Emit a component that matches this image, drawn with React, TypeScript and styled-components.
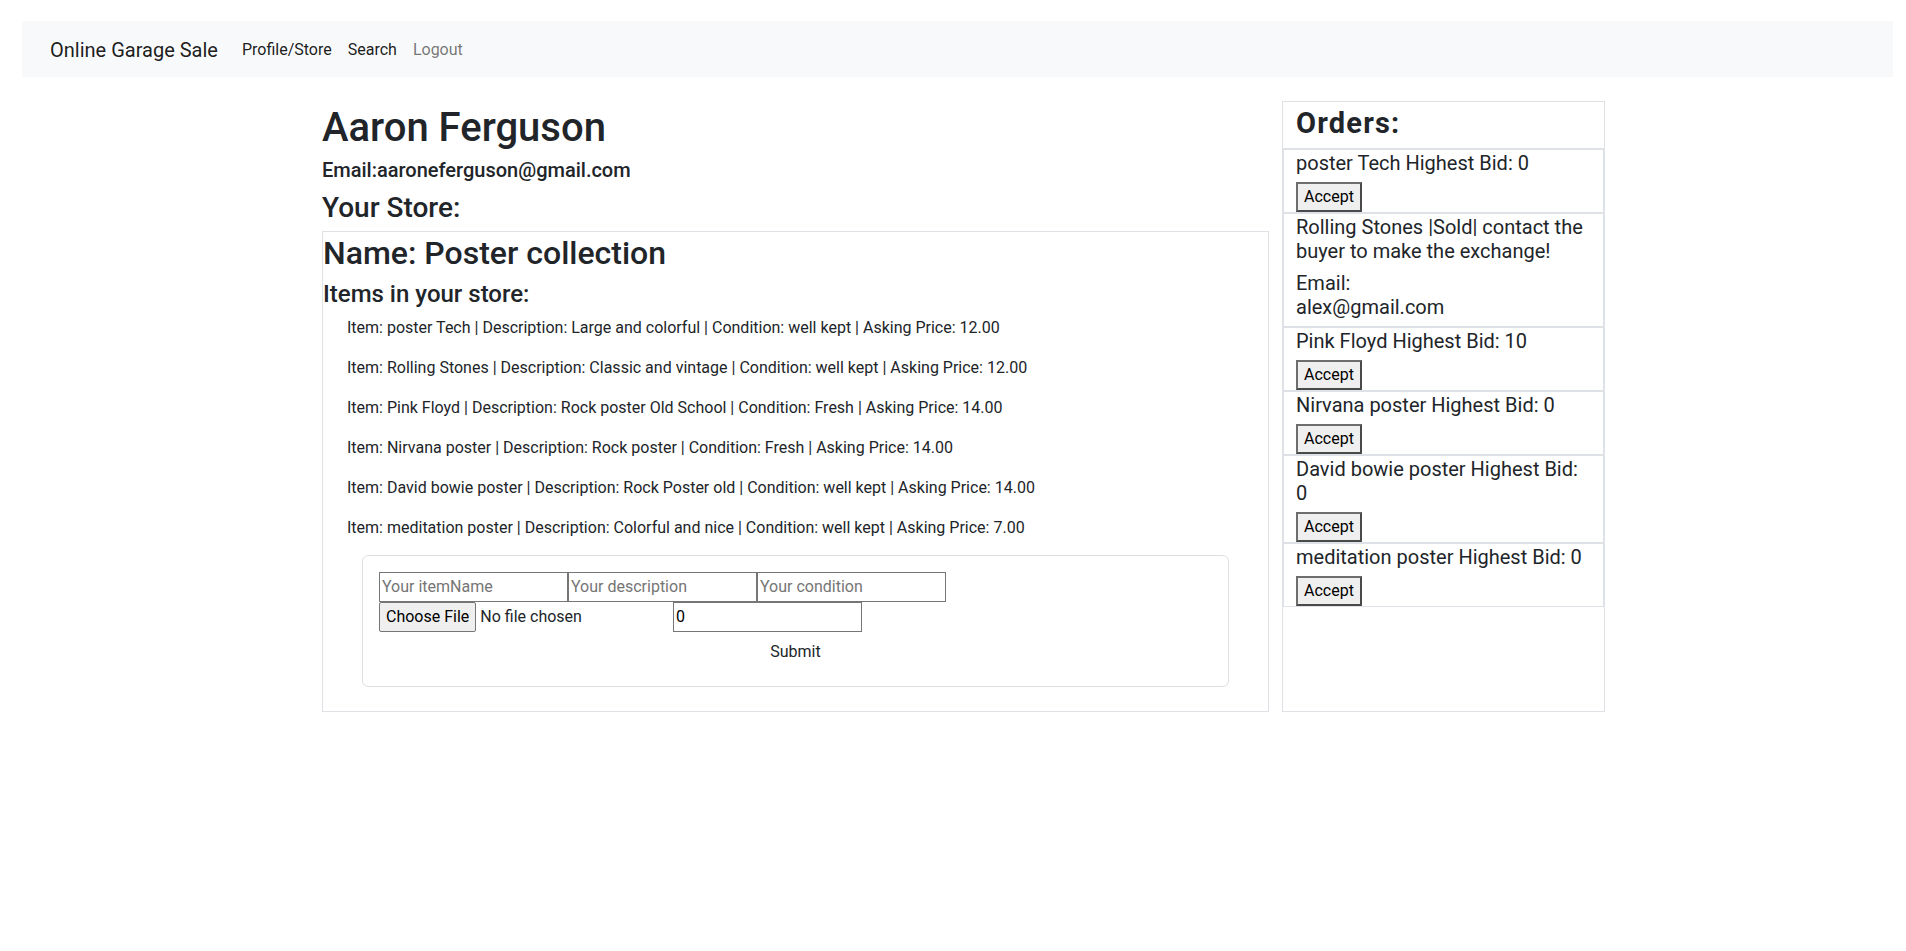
import React from "react";
import styled, { createGlobalStyle } from "styled-components";

const GlobalStyle = createGlobalStyle`
  *, *::before, *::after { box-sizing: border-box; }
  body {
    margin: 0;
    background: #ffffff;
    color: #212529;
    font-family: Roboto, "Liberation Sans", Arial, sans-serif;
    font-size: 16px;
    line-height: 1.5;
  }
`;

const Page = styled.div`
  padding-top: 21px;
  min-height: 951px;
`;

const NavBar = styled.nav`
  display: flex;
  align-items: center;
  height: 56px;
  margin: 0 13px 0 22px;
  padding: 8px 28px;
  background: #f8f9fa;
`;

const Brand = styled.a`
  font-size: 20px;
  line-height: 30px;
  padding: 6px 0 4px;
  margin-right: 16px;
  color: rgba(0, 0, 0, 0.9);
  text-decoration: none;
`;

const NavLinks = styled.div`
  display: flex;
`;

const NavLink = styled.a<{ $muted?: boolean }>`
  padding: 9px 8px 7px;
  font-size: 16px;
  line-height: 24px;
  color: ${(p) => (p.$muted ? "rgba(0, 0, 0, 0.55)" : "rgba(0, 0, 0, 0.9)")};
  text-decoration: none;
`;

const Main = styled.main`
  display: flex;
  align-items: stretch;
  gap: 13px;
  padding: 24px 0 0 322px;
`;

const ProfileColumn = styled.section`
  width: 947px;
  display: flex;
  flex-direction: column;
`;

const Heading = styled.h1<{ $size: number; $weight?: number }>`
  margin: 0 0 8px;
  font-size: ${(p) => p.$size}px;
  font-weight: ${(p) => p.$weight ?? 500};
  line-height: 1.2;
  padding-top: ${(p) => Math.round(p.$size * 0.07)}px;
  margin-bottom: ${(p) => 8 - Math.round(p.$size * 0.07)}px;
`;

const StoreBox = styled.div`
  border: 1px solid #dee2e6;
`;

const ItemList = styled.div`
  padding-left: 24px;
`;

const ItemLine = styled.p`
  margin: 0 0 15px;
  padding-top: 1px;
  font-size: 16px;
  line-height: 24px;
`;

const FormCard = styled.form`
  margin: 0 39px 24px;
  padding: 16px;
  border: 1px solid rgba(0, 0, 0, 0.125);
  border-radius: 6px;
`;

const FormRow = styled.div`
  display: flex;
`;

const TextInput = styled.input<{ $width?: number }>`
  width: ${(p) => p.$width ?? 189}px;
  height: 30px;
  margin: 0;
  padding: 1px 2px;
  border: 1px solid #767676;
  border-radius: 0;
  font: inherit;
  font-size: 16px;
  line-height: 24px;
  color: #000;
  background: #fff;
  &::placeholder { color: #757575; }
  &::-webkit-inner-spin-button,
  &::-webkit-outer-spin-button { opacity: 0; }
`;

const FileInput = styled.input`
  width: 294px;
  height: 30px;
  margin: 0;
  padding: 0;
  font: inherit;
  font-size: 16px;
  line-height: 24px;
  color: #212529;
  &::file-selector-button {
    height: 30px;
    margin: 0 4px 0 0;
    padding: 1px 6px;
    font: inherit;
    color: #000;
    background: #efefef;
    border: 1px solid #767676;
    border-radius: 2px;
  }
`;

const SubmitRow = styled.div`
  display: flex;
  justify-content: center;
`;

const SubmitButton = styled.button`
  padding: 7px 12px 5px;
  border: 1px solid transparent;
  background: transparent;
  font: inherit;
  font-size: 16px;
  line-height: 24px;
  color: #212529;
`;

const OrdersPanel = styled.aside`
  width: 323px;
  border: 1px solid #dee2e6;
  display: flex;
  flex-direction: column;
`;

const OrdersTitle = styled.h3`
  margin: 0;
  padding: 5px 12px 8px 13px;
  font-size: 29px;
  font-weight: 700;
  letter-spacing: 1.2px;
  line-height: 33px;
  border-bottom: 1px solid #dee2e6;
`;

const OrderItem = styled.div`
  display: flex;
  flex-direction: column;
  align-items: flex-start;
  padding: 0 12px;
  border: 1px solid #dee2e6;
`;

const OrderText = styled.p`
  margin: 0 0 7px;
  padding-top: 1px;
  font-size: 20px;
  line-height: 24px;
`;

const AcceptButton = styled.button`
  margin: 0;
  padding: 1px 6px;
  font: inherit;
  font-size: 16px;
  line-height: 24px;
  color: #000;
  background: #efefef;
  border: 2px solid;
  border-color: #6e6e6e #4a4a4a #4a4a4a #6e6e6e;
  border-radius: 0;
`;

const items = [
  "Item: poster Tech | Description: Large and colorful | Condition: well kept | Asking Price: 12.00",
  "Item: Rolling Stones | Description: Classic and vintage | Condition: well kept | Asking Price: 12.00",
  "Item: Pink Floyd | Description: Rock poster Old School | Condition: Fresh | Asking Price: 14.00",
  "Item: Nirvana poster | Description: Rock poster | Condition: Fresh | Asking Price: 14.00",
  "Item: David bowie poster | Description: Rock Poster old | Condition: well kept | Asking Price: 14.00",
  "Item: meditation poster | Description: Colorful and nice | Condition: well kept | Asking Price: 7.00",
];

type Order =
  | { kind: "bid"; name: string; bid: number }
  | { kind: "sold"; name: string; email: string };

const orders: Order[] = [
  { kind: "bid", name: "poster Tech", bid: 0 },
  { kind: "sold", name: "Rolling Stones", email: "alex@gmail.com" },
  { kind: "bid", name: "Pink Floyd", bid: 10 },
  { kind: "bid", name: "Nirvana poster", bid: 0 },
  { kind: "bid", name: "David bowie poster", bid: 0 },
  { kind: "bid", name: "meditation poster", bid: 0 },
];

export default function App() {
  return (
    <>
      <GlobalStyle />
      <Page>
        <NavBar>
          <Brand href="#">Online Garage Sale</Brand>
          <NavLinks>
            <NavLink href="#">Profile/Store</NavLink>
            <NavLink href="#">Search</NavLink>
            <NavLink href="#" $muted>
              Logout
            </NavLink>
          </NavLinks>
        </NavBar>
        <Main>
          <ProfileColumn>
            <Heading as="h1" $size={40}>Aaron Ferguson</Heading>
            <Heading as="h5" $size={20}>Email:aaroneferguson@gmail.com</Heading>
            <Heading as="h3" $size={28}>Your Store:</Heading>
            <StoreBox>
              <Heading as="h2" $size={32}>Name: Poster collection</Heading>
              <Heading as="h4" $size={24}>Items in your store:</Heading>
              <ItemList>
                {items.map((t) => (
                  <ItemLine key={t}>{t}</ItemLine>
                ))}
              </ItemList>
              <FormCard onSubmit={(e) => e.preventDefault()}>
                <FormRow>
                  <TextInput type="text" placeholder="Your itemName" />
                  <TextInput type="text" placeholder="Your description" />
                  <TextInput type="text" placeholder="Your condition" />
                </FormRow>
                <FormRow>
                  <FileInput type="file" />
                  <TextInput type="number" defaultValue={0} />
                </FormRow>
                <SubmitRow>
                  <SubmitButton type="submit">Submit</SubmitButton>
                </SubmitRow>
              </FormCard>
            </StoreBox>
          </ProfileColumn>
          <OrdersPanel>
            <OrdersTitle>Orders:</OrdersTitle>
            {orders.map((o) =>
              o.kind === "bid" ? (
                <OrderItem key={o.name}>
                  <OrderText>
                    {o.name} Highest Bid: {o.bid}
                  </OrderText>
                  <AcceptButton type="button">Accept</AcceptButton>
                </OrderItem>
              ) : (
                <OrderItem key={o.name}>
                  <OrderText>{o.name} |Sold| contact the buyer to make the exchange!</OrderText>
                  <OrderText>
                    Email:
                    <br />
                    {o.email}
                  </OrderText>
                </OrderItem>
              )
            )}
          </OrdersPanel>
        </Main>
      </Page>
    </>
  );
}
